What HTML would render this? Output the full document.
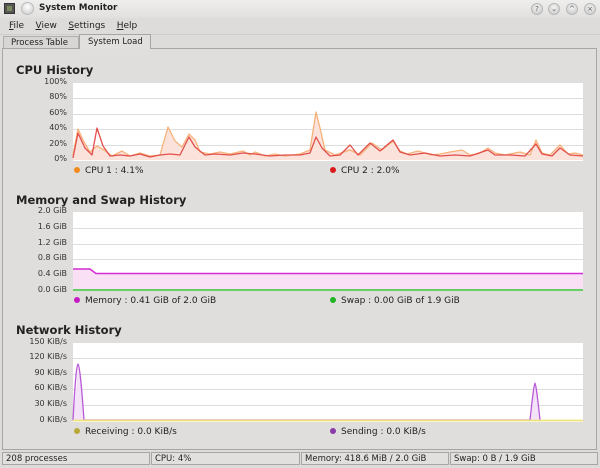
<!DOCTYPE html>
<html><head><meta charset="utf-8"><style>
*{margin:0;padding:0;box-sizing:border-box}
body{width:600px;height:468px;background:#dedcda;font-family:"DejaVu Sans","Liberation Sans",sans-serif;font-size:9px;color:#222;position:relative;overflow:hidden}
.a{position:absolute;white-space:nowrap}
.t{font-weight:bold;font-size:11.5px;color:#222}
.ax{font-size:8px;text-align:right;width:52px;color:#333}
.dot{display:inline-block;width:6px;height:6px;border-radius:50%;margin-right:5px;vertical-align:0}
.sb{position:absolute;top:452px;height:13px;border:1px solid #a8a6a4;background:#e2e0de;font-size:8.5px;padding:1px 3px;line-height:10px}
.btn{position:absolute;top:3px;width:12px;height:12px;border-radius:50%;background:radial-gradient(circle at 50% 35%,#f4f4f4,#c4c4c4);border:1px solid #b8b8b8;font-size:7px;line-height:10px;text-align:center;color:#555}
</style></head><body>
<div class="a" style="left:0;top:0;width:600px;height:18px;background:linear-gradient(#eeeeec,#e2e0de)"></div>
<div class="a" style="left:4px;top:3px;width:11px;height:11px;background:#555;border:1px solid #333"><div style="margin:2px;width:5px;height:5px;background:#7a8a5a"></div></div>
<div class="a" style="left:21px;top:2px;width:13px;height:13px;border-radius:50%;background:radial-gradient(circle at 50% 35%,#fff,#c8c8c8);border:1px solid #bbb"></div>
<div class="a" style="left:39px;top:3px;font-weight:bold;font-size:8.8px">System Monitor</div>
<div class="btn" style="left:531px">?</div><div class="btn" style="left:548px">⌄</div><div class="btn" style="left:566px">^</div><div class="btn" style="left:584px">×</div>
<div class="a" style="left:9px;top:21px;font-size:9px"><u>F</u>ile&nbsp;&nbsp;&nbsp;&nbsp;<u>V</u>iew&nbsp;&nbsp;&nbsp;&nbsp;<u>S</u>ettings&nbsp;&nbsp;&nbsp;&nbsp;<u>H</u>elp</div>
<div class="a" style="left:0;top:34px;width:600px;height:1px;background:#cfcdcb"></div>
<div class="a" style="left:3px;top:36px;width:76px;height:13px;border:1px solid #b0aeac;border-bottom:none;background:#d8d6d4;font-size:8.5px;padding:1px 0 0 7px">Process Table</div>
<div class="a" style="left:79px;top:34px;width:72px;height:15px;border:1px solid #a8a6a4;border-bottom:none;background:#e2e0de;font-size:8.5px;padding:2px 0 0 8px;z-index:2">System Load</div>
<div class="a" style="left:2px;top:48px;width:595px;height:402px;border:1px solid #a8a6a4;background:#e0dedc"></div>

<div class="a t" style="left:16px;top:63px">CPU History</div>
<div class="a ax" style="left:15px;top:77px">100%</div><div class="a ax" style="left:15px;top:92px">80%</div><div class="a ax" style="left:15px;top:108px">60%</div><div class="a ax" style="left:15px;top:123px">40%</div><div class="a ax" style="left:15px;top:139px">20%</div><div class="a ax" style="left:15px;top:154px">0%</div>
<div class="a t" style="left:16px;top:193px">Memory and Swap History</div>
<div class="a ax" style="left:15px;top:206px">2.0 GiB</div><div class="a ax" style="left:15px;top:222px">1.6 GiB</div><div class="a ax" style="left:15px;top:238px">1.2 GiB</div><div class="a ax" style="left:15px;top:253px">0.8 GiB</div><div class="a ax" style="left:15px;top:269px">0.4 GiB</div><div class="a ax" style="left:15px;top:285px">0.0 GiB</div>
<div class="a t" style="left:16px;top:323px">Network History</div>
<div class="a ax" style="left:15px;top:337px">150 KiB/s</div><div class="a ax" style="left:15px;top:352px">120 KiB/s</div><div class="a ax" style="left:15px;top:368px">90 KiB/s</div><div class="a ax" style="left:15px;top:383px">60 KiB/s</div><div class="a ax" style="left:15px;top:399px">30 KiB/s</div><div class="a ax" style="left:15px;top:415px">0 KiB/s</div>

<svg class="a" style="left:0;top:0" width="600" height="468">
<g fill="#fff"><rect x="73" y="83" width="510" height="78"/><rect x="73" y="212" width="510" height="79"/><rect x="73" y="343" width="510" height="79"/></g>
<g stroke="#dedede" stroke-width="1">
<path d="M73 98.5H583M73 114.5H583M73 129.5H583M73 145.5H583M73 228.5H583M73 244.5H583M73 259.5H583M73 275.5H583M73 358.5H583M73 374.5H583M73 389.5H583M73 405.5H583"/></g>
<g stroke-linejoin="round">
<polygon fill="#fbe3dc" points="73,160 73,155 78,129 84,142 90,152 97,146 104,150 112,156 122,151 130,156 140,153 150,156 160,155 168,127 175,141 182,147 189,134 195,140 200,152 210,154 220,152 230,154 243,151 250,155 255,152 265,156 275,154 285,156 300,154 310,150 316,112 320,128 325,150 335,155 350,148 360,155 372,143 382,150 393,141 400,151 407,154 418,151 431,155 440,154 450,152 462,150 470,155 478,154 488,148 495,153 505,155 520,152 530,155 536,140 542,153 550,155 560,145 568,154 575,153 583,155 583,160"/>
<polyline fill="none" stroke="#f5b27a" stroke-width="1.3" points="73,155 78,129 84,142 90,152 97,146 104,150 112,156 122,151 130,156 140,153 150,156 160,155 168,127 175,141 182,147 189,134 195,140 200,152 210,154 220,152 230,154 243,151 250,155 255,152 265,156 275,154 285,156 300,154 310,150 316,112 320,128 325,150 335,155 350,150 360,155 372,143 382,150 393,141 400,151 407,154 418,151 431,155 440,154 450,152 462,150 470,155 478,154 488,148 495,153 505,155 520,152 530,155 536,140 542,153 550,155 560,145 568,154 575,153 583,155"/>
<polyline fill="none" stroke="#e2504c" stroke-width="1.3" points="73,158 78,133 85,148 92,155 97,128 103,146 110,156 120,155 130,156 140,154 150,157 160,155 170,154 180,155 189,137 195,147 205,155 215,154 230,155 243,153 255,154 270,156 285,155 300,155 310,153 316,137 322,148 330,156 340,155 350,145 358,155 370,143 380,151 393,140 400,152 410,155 425,153 440,156 455,155 470,156 488,150 495,155 510,155 525,156 536,144 542,154 552,156 560,148 570,155 583,156"/>
</g>
<polygon fill="#fae0f4" points="73,269 90,269 96,273 583,273 583,290 73,290"/>
<polyline fill="none" stroke="#d42bd4" stroke-width="1.5" points="73,269 90,269 96,273.5 583,273.5"/>
<line x1="73" y1="290" x2="583" y2="290" stroke="#33c233" stroke-width="1.5"/>
<polygon fill="#f4e2f8" points="73,420 76,390 78,364 80,375 84,420 530,420 535,383 540,420"/>
<path fill="none" stroke="#b85ad8" stroke-width="1.3" d="M73 420 Q76 364 78 364 Q80 364 84 420 H530 Q534 383 535 383 Q536 383 540 420"/>
<line x1="73" y1="420.5" x2="583" y2="420.5" stroke="#eee27a" stroke-width="1.8"/>
</svg>

<div class="a" style="left:74px;top:166px"><span class="dot" style="background:#f08a1c"></span>CPU 1 : 4.1%</div>
<div class="a" style="left:330px;top:166px"><span class="dot" style="background:#d81c1c"></span>CPU 2 : 2.0%</div>
<div class="a" style="left:74px;top:296px"><span class="dot" style="background:#c21cc2"></span>Memory : 0.41 GiB of 2.0 GiB</div>
<div class="a" style="left:330px;top:296px"><span class="dot" style="background:#22b422"></span>Swap : 0.00 GiB of 1.9 GiB</div>
<div class="a" style="left:74px;top:427px"><span class="dot" style="background:#b8a83a"></span>Receiving : 0.0 KiB/s</div>
<div class="a" style="left:330px;top:427px"><span class="dot" style="background:#8a3aa8"></span>Sending : 0.0 KiB/s</div>

<div class="sb" style="left:2px;width:148px">208 processes</div>
<div class="sb" style="left:151px;width:149px">CPU: 4%</div>
<div class="sb" style="left:301px;width:148px">Memory: 418.6 MiB / 2.0 GiB</div>
<div class="sb" style="left:450px;width:148px">Swap: 0 B / 1.9 GiB</div>
</body></html>
